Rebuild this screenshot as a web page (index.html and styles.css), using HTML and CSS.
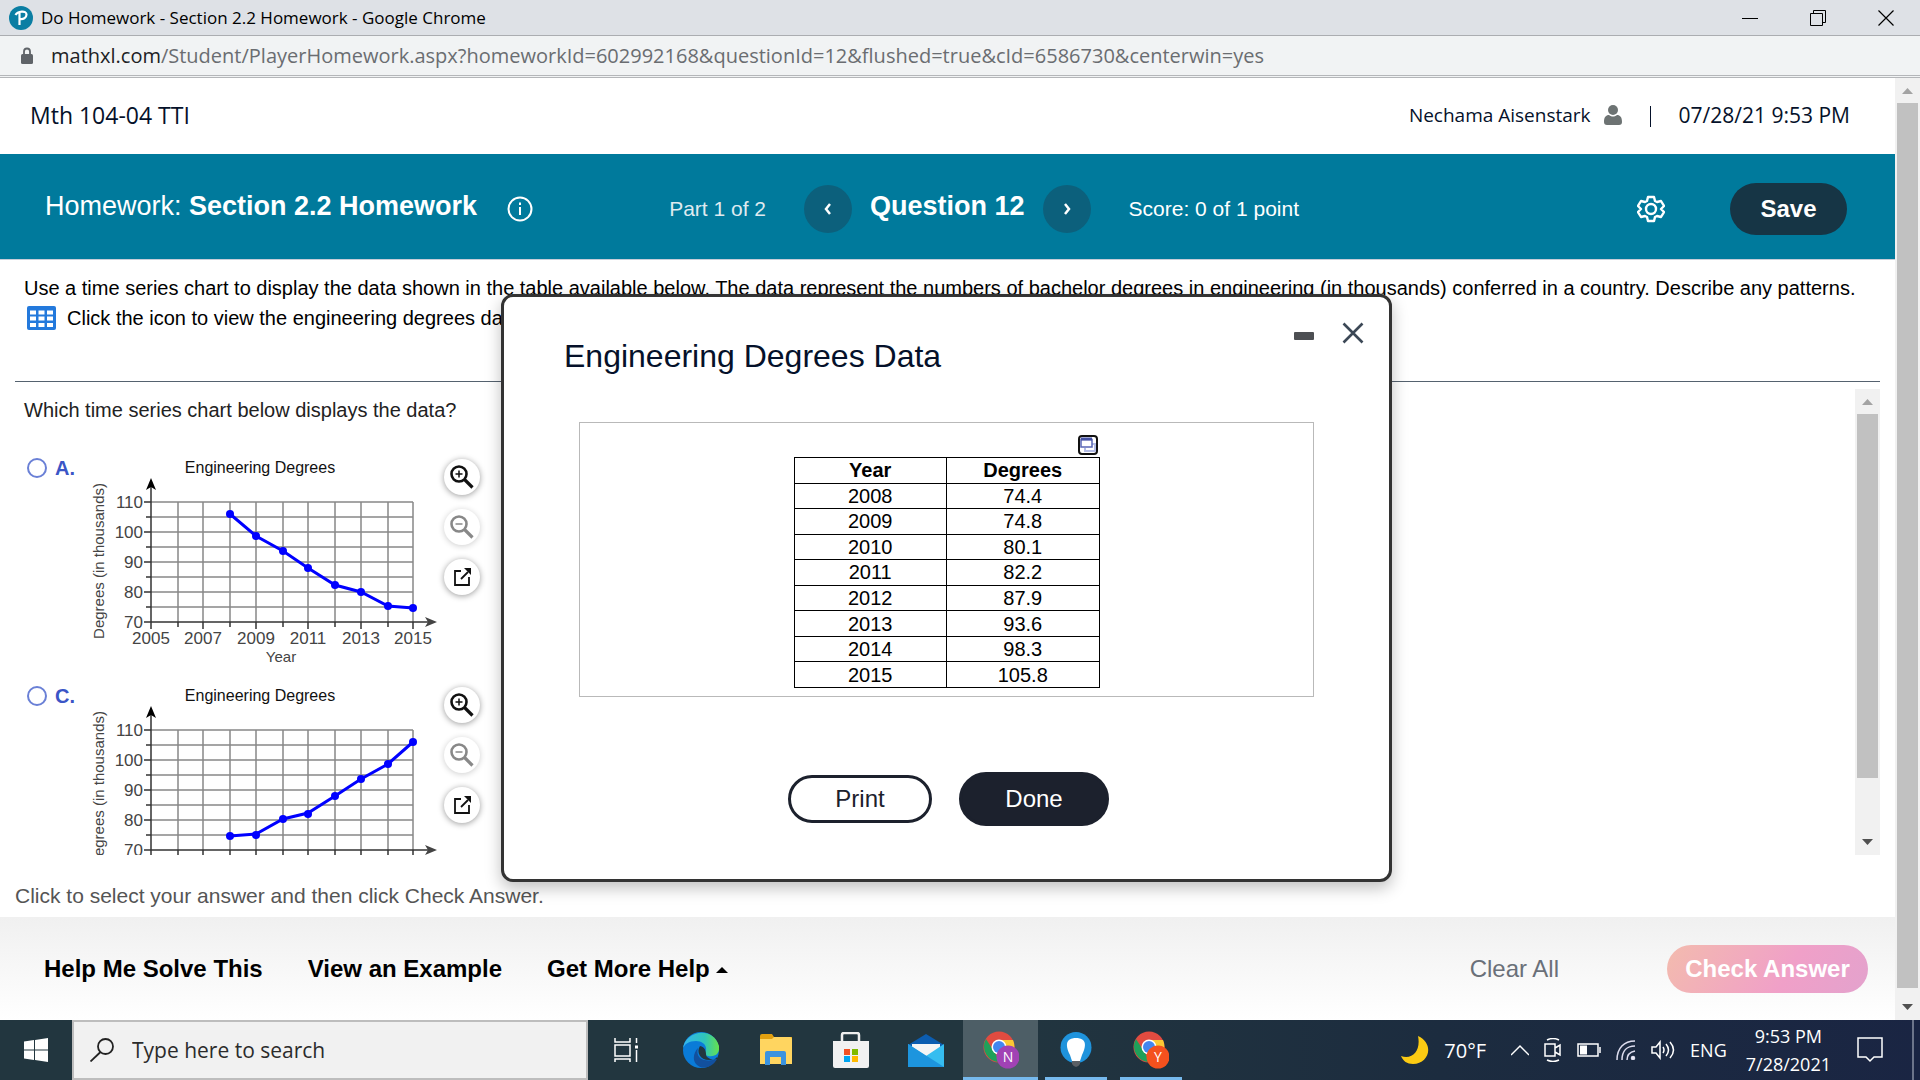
FILE: index.html
```html
<!DOCTYPE html>
<html lang="en">
<head>
    <meta charset="UTF-8">
    <meta name="viewport" content="width=device-width, initial-scale=1.0">
    <title>Do Homework - Section 2.2 Homework</title>
    <link rel="stylesheet" href="styles.css">
</head>
<body>
    <!-- Shared icons -->
    <svg class="defs" width="0" height="0" aria-hidden="true">
        <symbol id="zoom-in" viewBox="0 0 24 24">
            <circle cx="9" cy="9" r="7.5" fill="none" stroke="currentColor" stroke-width="2.6"/>
            <path d="M5.500 9h7M9 5.500v7" fill="none" stroke="currentColor" stroke-width="1.500"/>
            <path d="M14.500 14.500l8 8" stroke="currentColor" stroke-width="3.200"/>
        </symbol>
        <symbol id="zoom-out" viewBox="0 0 24 24">
            <circle cx="9" cy="9" r="7.5" fill="none" stroke="currentColor" stroke-width="2.600"/>
            <path d="M5.500 9h7" fill="none" stroke="currentColor" stroke-width="1.500"/>
            <path d="M14.500 14.500l8 8" stroke="currentColor" stroke-width="3.200"/>
        </symbol>
        <symbol id="pop-out" viewBox="0 0 24 24">
            <path d="M11 6H5v14h14v-8" fill="none" stroke="currentColor" stroke-width="1.800"/>
            <path d="M11 14l7-7" stroke="currentColor" stroke-width="1.800"/>
            <path d="M14 3h7v7z" fill="currentColor"/>
        </symbol>
        <symbol id="axes" viewBox="0 0 360 215">
            <path d="M63 47H325M63 62H325M63 77H325M63 92H325M63 107H325M63 122H325M63 137H325M63 152H325M90 47V167M115 47V167M142 47V167M168 47V167M195 47V167M220 47V167M247 47V167M273 47V167M300 47V167M325 47V167" stroke="#888" stroke-width="1.500"/>
            <path d="M63 30V174M56 47h7M58 62h5M56 77h7M58 92h5M56 107h7M58 122h5M56 137h7M58 152h5M56 167H340M90 167v5M115 167v7M142 167v5M168 167v7M195 167v5M220 167v7M247 167v5M273 167v7M300 167v5M325 167v7" stroke="#333" stroke-width="1.500"/>
            <path d="M63 23l5 12-5-3-5 3z" fill="#000"/>
            <path d="M349 167l-12-5 3 5-3 5z" fill="#444"/>
        </symbol>
        <symbol id="chrome" viewBox="0 0 36 36">
            <circle cx="16" cy="16" r="15.500" fill="#e14b40"/>
            <path d="M3 8L12 22 17 31A15.500 15.500 0 0 1 3 8z" fill="#1fa05a"/>
            <path d="M16 9h14a15.500 15.500 0 0 1-14 22l7-11z" fill="#fbc834"/>
            <circle cx="16" cy="16" r="7.500" fill="#fff"/>
            <circle cx="16" cy="16" r="6" fill="#4286f0"/>
        </symbol>
    </svg>

    <div class="titlebar">
        <svg width="24" height="24" viewBox="0 0 24 24" aria-hidden="true"><circle cx="12" cy="12" r="12" fill="#0b7ea3"/><path d="M10.500 19V7M6.500 9c2-4 11-5 11-.5 0 3.500-3.500 5-6.500 4.500" fill="none" stroke="#fff" stroke-width="2.200"/></svg>
        <span class="window-title">Do Homework - Section 2.2 Homework - Google Chrome</span>
        <div class="window-buttons">
            <button type="button" aria-label="Minimize window"><svg width="16" height="18"><path d="M0 9.500h16" stroke="#000"/></svg></button>
            <button type="button" aria-label="Restore window"><svg width="16" height="16" fill="none" stroke="#000"><path d="M.5 3.500h12v12H.5zM3.500 3V.5h12v12H13"/></svg></button>
            <button type="button" aria-label="Close window"><svg width="16" height="16"><path d="M.5.5l15 15M15.500.5l-15 15" stroke="#000" stroke-width="1.200"/></svg></button>
        </div>
    </div>

    <div class="addressbar">
        <svg width="14" height="18" viewBox="0 0 14 18" aria-hidden="true"><path d="M4 7V4.500a3 3 0 0 1 6 0V7" fill="none" stroke="#5f6368" stroke-width="1.800"/><rect x="1" y="7" width="12" height="10" rx="1.500" fill="#5f6368"/></svg>
        <span class="url"><span class="host">mathxl.com</span>/Student/PlayerHomework.aspx?homeworkId=602992168&amp;questionId=12&amp;flushed=true&amp;cId=6586730&amp;centerwin=yes</span>
    </div>

    <div class="window">
        <div class="page">
            <header class="course-header">
                <span class="course">Mth 104-04 TTI</span>
                <span class="user">Nechama Aisenstark</span>
                <svg class="user-icon" width="18" height="20" viewBox="0 0 18 20" aria-hidden="true"><circle cx="9" cy="5" r="5" fill="#6d7373"/><path d="M0 17c0-5 2-7 5-7 3 2 5 2 8 0 3 0 5 2 5 7q0 3-3 3H3q-3 0-3-3z" fill="#6d7373"/></svg>
                <span class="divider"></span>
                <span class="date">07/28/21 9:53 PM</span>
            </header>

            <nav class="question-bar">
                <h1>Homework: <b>Section 2.2 Homework</b></h1>
                <button type="button" class="info" aria-label="Information"><svg width="26" height="26" fill="none" stroke="#fff" stroke-width="2"><circle cx="13" cy="13" r="11.500"/><path d="M13 11v8M13 6.500v2.500"/></svg></button>
                <span class="part">Part 1 of 2</span>
                <button type="button" class="step" aria-label="Previous question"><svg width="12" height="12" fill="none" stroke="#fff" stroke-width="2.500"><path d="M8 1L4 6l4 5"/></svg></button>
                <h2>Question 12</h2>
                <button type="button" class="step" aria-label="Next question"><svg width="12" height="12" fill="none" stroke="#fff" stroke-width="2.500"><path d="M4 1l4 5-4 5"/></svg></button>
                <span class="score">Score: 0 of 1 point</span>
                <button type="button" class="settings" aria-label="Settings"><svg width="28" height="28" viewBox="0 0 28 28" fill="none" stroke="#fff" stroke-width="2.400" stroke-linejoin="round"><path d="M11 2h6l1 4 2 1 4-1 3 5-3 3 3 3-3 5-4-1-2 1-1 4h-6l-1-4-2-1-4 1-3-5 3-3-3-3 3-5 4 1 2-1z"/><circle cx="14" cy="14" r="5"/></svg></button>
                <button type="button" class="save">Save</button>
            </nav>

            <main class="question">
                <div class="prompt">
                    <p>Use a time series chart to display the data shown in the table available below. The data represent the numbers of bachelor degrees in engineering (in thousands) conferred in a country. Describe any patterns.</p>
                    <a href="#data" class="data-link">
                        <svg width="29" height="24" aria-hidden="true"><rect width="29" height="24" rx="2" fill="#2379dc"/><path d="M3 6.500h6M11.500 6.500h6M20 6.500h6M3 12.500h6M11.500 12.500h6M20 12.500h6M3 19h6M11.500 19h6M20 19h6" stroke="#fff" stroke-width="4"/></svg>
                        <span>Click the icon to view the engineering degrees data.</span>
                    </a>
                </div>

                <div class="answers">
                    <div class="answer-list">
                        <p>Which time series chart below displays the data?</p>
                        <div class="choice">
                            <label><input type="radio" name="answer"> A.</label>
                            <svg class="chart" width="360" height="215">
                                <use href="#axes"/>
                                <text x="172" y="18" class="chart-title">Engineering Degrees</text>
                                <text transform="translate(16 106) rotate(-90)" class="axis-name">Degrees (in thousands)</text>
                                <g class="y-labels"><text x="55" y="53">110</text><text x="55" y="83">100</text><text x="55" y="113">90</text><text x="55" y="143">80</text><text x="55" y="173">70</text></g>
                                <g class="x-labels"><text x="63" y="189">2005</text><text x="115" y="189">2007</text><text x="168" y="189">2009</text><text x="220" y="189">2011</text><text x="273" y="189">2013</text><text x="325" y="189">2015</text></g>
                                <text x="193" y="207" class="axis-name">Year</text>
                                <polyline points="142,59 168,81 195,96 220,113 247,130 273,137 300,151 325,153"/>
                                <g class="dots"><circle cx="142" cy="59" r="4"/><circle cx="168" cy="81" r="4"/><circle cx="195" cy="96" r="4"/><circle cx="220" cy="113" r="4"/><circle cx="247" cy="130" r="4"/><circle cx="273" cy="137" r="4"/><circle cx="300" cy="151" r="4"/><circle cx="325" cy="153" r="4"/></g>
                            </svg>
                            <div class="tools">
                                <button type="button" aria-label="Zoom in"><svg><use href="#zoom-in"/></svg></button>
                                <button type="button" aria-label="Zoom out" disabled><svg><use href="#zoom-out"/></svg></button>
                                <button type="button" aria-label="Open in new window"><svg><use href="#pop-out"/></svg></button>
                            </div>
                        </div>
                        <div class="choice">
                            <label><input type="radio" name="answer"> C.</label>
                            <svg class="chart" width="360" height="215">
                                <use href="#axes"/>
                                <text x="172" y="18" class="chart-title">Engineering Degrees</text>
                                <text transform="translate(16 106) rotate(-90)" class="axis-name">Degrees (in thousands)</text>
                                <g class="y-labels"><text x="55" y="53">110</text><text x="55" y="83">100</text><text x="55" y="113">90</text><text x="55" y="143">80</text><text x="55" y="173">70</text></g>
                                <polyline points="142,153 168,151 195,136 220,130 247,113 273,96 300,81 325,59"/>
                                <g class="dots"><circle cx="142" cy="153" r="4"/><circle cx="168" cy="152" r="4"/><circle cx="195" cy="136" r="4"/><circle cx="220" cy="131" r="4"/><circle cx="247" cy="113" r="4"/><circle cx="273" cy="96" r="4"/><circle cx="300" cy="81" r="4"/><circle cx="325" cy="59" r="4"/></g>
                            </svg>
                            <div class="tools">
                                <button type="button" aria-label="Zoom in"><svg><use href="#zoom-in"/></svg></button>
                                <button type="button" aria-label="Zoom out" disabled><svg><use href="#zoom-out"/></svg></button>
                                <button type="button" aria-label="Open in new window"><svg><use href="#pop-out"/></svg></button>
                            </div>
                        </div>
                    </div>
                    <div class="scrollbar inner"><span class="arrow up"></span><span class="thumb"></span><span class="arrow down"></span></div>
                </div>

                <p class="hint">Click to select your answer and then click Check Answer.</p>
            </main>

            <footer class="actions">
                <a href="#help">Help Me Solve This</a>
                <a href="#example">View an Example</a>
                <a href="#more">Get More Help <span class="caret"></span></a>
                <button type="button" class="clear">Clear All</button>
                <button type="button" class="check">Check Answer</button>
            </footer>

            <section class="modal" id="data" role="dialog" aria-labelledby="modal-title">
                <div class="modal-controls">
                    <button type="button" aria-label="Minimize"><svg width="20" height="22"><rect y="10" width="20" height="8" rx="1" fill="#4d4f53"/></svg></button>
                    <button type="button" aria-label="Close"><svg width="22" height="22"><path d="M1.500 1.500l19 19M20.500 1.500l-19 19" stroke="#3c4856" stroke-width="2.600"/></svg></button>
                </div>
                <h3 id="modal-title">Engineering Degrees Data</h3>
                <div class="data-box">
                    <div class="data-wrap">
                        <button type="button" class="copy" aria-label="Copy data"><svg width="20" height="20" fill="none"><rect x="1" y="1" width="18" height="18" rx="3" fill="#fff" stroke="#111" stroke-width="2"/><path d="M7 13v3h10V9h-3" stroke="#b3bce6" stroke-width="2"/><path d="M3 4.500h11V12H3z" stroke="#5865b5" stroke-width="1.500"/><path d="M3 4h11" stroke="#4451a5" stroke-width="3"/></svg></button>
                        <table>
                            <tr><th>Year</th><th>Degrees</th></tr>
                            <tr><td>2008</td><td>74.4</td></tr>
                            <tr><td>2009</td><td>74.8</td></tr>
                            <tr><td>2010</td><td>80.1</td></tr>
                            <tr><td>2011</td><td>82.2</td></tr>
                            <tr><td>2012</td><td>87.9</td></tr>
                            <tr><td>2013</td><td>93.6</td></tr>
                            <tr><td>2014</td><td>98.3</td></tr>
                            <tr><td>2015</td><td>105.8</td></tr>
                        </table>
                    </div>
                </div>
                <div class="modal-buttons">
                    <button type="button" class="print">Print</button>
                    <button type="button" class="done">Done</button>
                </div>
            </section>
        </div>
        <div class="scrollbar outer"><span class="arrow up"></span><span class="thumb"></span><span class="arrow down"></span></div>
    </div>

    <div class="taskbar">
        <button type="button" class="start" aria-label="Start"><svg width="24" height="24" fill="#fff"><path d="M0 3.500L10 2v9.500H0zM11 2l13-2v11.500H11zM0 12.500h10V22L0 20.500zM11 12.500h13V24l-13-2z"/></svg></button>
        <label class="search">
            <svg width="24" height="24" fill="none" stroke="#222" stroke-width="1.800"><circle cx="15.500" cy="8.500" r="7.500"/><path d="M10.500 14L.5 23.500"/></svg>
            <input type="text" placeholder="Type here to search" aria-label="Search">
        </label>
        <div class="apps">
            <button type="button" aria-label="Task view"><svg width="24" height="24" fill="none" stroke="#fff" stroke-width="1.500"><path d="M1 0v4h15V0M1 7h15v11H1zM1 24v-3h15v3M22.500 0v5M22.500 12v12"/><path d="M21 9h3" stroke-width="3"/></svg></button>
            <button type="button" aria-label="Edge"><svg width="36" height="36" viewBox="0 0 36 36">
                <defs><linearGradient id="edge-top"><stop stop-color="#35b5f0"/><stop offset=".6" stop-color="#2fc5ba"/><stop offset="1" stop-color="#66e24c"/></linearGradient></defs>
                <circle cx="18" cy="18" r="18" fill="#0a7bd8"/>
                <path d="M0 17C1-1 30-7 36 14c1 9-5 11-11 10-5-1-3-3-2-6 1-5-4-9-10-9C6 9 1 12 0 17z" fill="url(#edge-top)"/>
                <path d="M17 14c-4 6 0 14 9 14 4 0 7-1 8-3l2 11H24l12-9c-3 1-13 1-13-5 0-3-1-7-6-8z" fill="#22363f"/>
                <path d="M15 16c-3 10 6 15 19 11-4 8-15 12-21 5-4-5-2-12 2-16z" fill="#12509e"/>
            </svg></button>
            <button type="button" aria-label="File Explorer"><svg width="32" height="32"><path d="M0 2q0-2 2-2h10l2 3h18v7H0z" fill="#e2a010"/><path d="M0 5h12l2-2h16q2 0 2 2v25H0z" fill="#ffd560"/><path d="M5 31V19q0-2 2-2h17q2 0 2 2v12h-5v-8H10v8z" fill="#3b93df"/></svg></button>
            <button type="button" aria-label="Microsoft Store"><svg width="36" height="36"><path d="M9 11V3q0-2 2-2h13q2 0 2 2v8" fill="none" stroke="#eee" stroke-width="2.500"/><path d="M0 9h36v25q0 2-2 2H2q-2 0-2-2z" fill="#f1f1f1"/><path d="M11 17h6v6h-6z" fill="#f25022"/><path d="M19 17h6v6h-6z" fill="#7fba00"/><path d="M11 24h6v6h-6z" fill="#00a4ef"/><path d="M19 24h6v6h-6z" fill="#ffb900"/></svg></button>
            <button type="button" aria-label="Mail"><svg width="36" height="33"><path d="M0 11L18 0l18 11v9H0z" fill="#0c5db0"/><path d="M4 10h28v9L18 25 4 19z" fill="#f5f5f5"/><path d="M0 10l18 12L36 10v23H0z" fill="#36bdf0"/><path d="M0 10l36 23H0z" fill="#1d95de"/></svg></button>
            <button type="button" class="running active" aria-label="Chrome, profile N"><svg width="36" height="38" viewBox="0 0 36 38"><use href="#chrome" width="36" height="36"/><circle cx="25" cy="26" r="11.500" fill="#a142b4"/><text x="25" y="31" class="badge">N</text></svg></button>
            <button type="button" class="running" aria-label="Tips"><svg width="32" height="36"><circle cx="16" cy="15.500" r="15.500" fill="#1f93dc"/><path d="M10 23C2 7 12 6 16 6s14 1 6 17l-2 6h-8z" fill="#fff"/><path d="M12 29h8v3q-4 6-8 0z" fill="#5a5f64"/></svg></button>
            <button type="button" class="running" aria-label="Chrome, profile Y"><svg width="36" height="38" viewBox="0 0 36 38"><use href="#chrome" width="36" height="36"/><circle cx="25" cy="26" r="11.500" fill="#f4511e"/><text x="25" y="31" class="badge">Y</text></svg></button>
        </div>
        <div class="tray">
            <svg width="28" height="28"><path d="M17 0c17 8 11 28-5 28C6 28 2 25 0 20c12 4 20-6 17-20z" fill="#fccb13"/></svg>
            <span class="temp">70°F</span>
            <svg width="18" height="12" fill="none" stroke="#fff" stroke-width="1.500"><path d="M0 11l9-9 9 9"/></svg>
            <svg width="18" height="24" fill="none" stroke="#fff" stroke-width="1.500"><path d="M3 2q6-3 12 0M3 22q6 3 12 0M1 6h10v12H1zM11 10l5-3v10l-5-3"/></svg>
            <svg width="24" height="14" fill="none" stroke="#fff" stroke-width="1.500"><path d="M1 1h20v12H1zM23 4v6"/><path d="M3 7h7" stroke-width="9"/></svg>
            <svg width="20" height="20" fill="none" stroke="#dde" stroke-width="1.500"><path d="M1 20C1 8 8 1 19 1M6 20C6 11 11 6 19 6M11 20c0-5 3-8 8-9"/><circle cx="17" cy="18" r="1.500" fill="#fff"/></svg>
            <svg width="24" height="20" fill="none" stroke="#fff" stroke-width="1.500"><path d="M1 7h4l4-5v16l-4-5H1zM12 7q2 3 0 6M15 4q5 6 0 12M19 2q7 8 0 16"/></svg>
            <span class="lang">ENG</span>
            <div class="clock"><span>9:53 PM</span><span>7/28/2021</span></div>
            <button type="button" aria-label="Notifications"><svg width="26" height="26" fill="none" stroke="#fff" stroke-width="1.500"><path d="M1 1h24v19h-8l-4 4-4-4H1z"/></svg></button>
        </div>
    </div>
</body>
</html>
```

FILE: styles.css
```css
* {
    box-sizing: border-box;
}

body {
    margin: 0;
    height: 100vh;
    display: flex;
    flex-direction: column;
    overflow: hidden;
    background-color: #fff;
    color: #000;
    font-family: "Liberation Sans", Arial, sans-serif;
    font-size: 20px;
}

h1, h2, h3, p {
    margin: 0;
}

button {
    margin: 0;
    padding: 0;
    border: none;
    background: none;
    font-family: inherit;
    cursor: pointer;
}

button svg {
    display: block;
}

.defs {
    position: absolute;
}

/* Browser window */
.titlebar {
    display: flex;
    align-items: center;
    height: 36px;
    padding-left: 9px;
    background-color: #dee1e6;
    border-bottom: 1px solid #abadb1;
    font-family: "Open Sans", sans-serif;
    font-size: 17px;
}

.window-title {
    margin-left: 8px;
}

.window-buttons {
    display: flex;
    margin-left: auto;
}

.window-buttons button {
    width: 68px;
    height: 32px;
    display: flex;
    align-items: center;
    justify-content: center;
}

.addressbar {
    display: flex;
    align-items: center;
    height: 42px;
    padding: 0 20px;
    background-color: #f1f3f4;
    border-bottom: 3px double #b4b6b9;
    color: #6a6d71;
    font-family: "Open Sans", sans-serif;
    font-size: 20px;
}

.url {
    margin-left: 17px;
}

.host {
    color: #202124;
}

.window {
    flex: 1;
    min-height: 0;
    display: flex;
}

.page {
    position: relative;
    flex: 1;
    min-width: 0;
    display: flex;
    flex-direction: column;
}

/* Scrollbars */
.scrollbar {
    display: flex;
    flex-direction: column;
    align-items: center;
    width: 25px;
    background-color: #f1f1f1;
}

.scrollbar .thumb {
    width: 21px;
    background-color: #c1c1c1;
}

.inner .thumb {
    height: 364px;
}

.outer .thumb {
    height: 885px;
}

.arrow {
    width: 11px;
    height: 6px;
    clip-path: polygon(50% 0, 100% 100%, 0 100%);
    background-color: #a3a3a3;
    margin: 10px 0 9px;
}

.arrow.down {
    clip-path: polygon(0 0, 100% 0, 50% 100%);
    background-color: #505050;
    margin: auto 0 10px;
}

/* Course header */
.course-header {
    display: flex;
    align-items: center;
    height: 76px;
    padding: 0 45px 3px 30px;
    color: #05112a;
    font-family: "Open Sans", sans-serif;
    font-size: 23px;
}

.user {
    margin-left: auto;
    font-size: 19px;
}

.user-icon {
    margin-left: 13px;
}

.divider {
    width: 1px;
    height: 21px;
    margin: 4px 28px 0;
    background-color: #05112a;
}

.date {
    font-size: 21px;
}

/* Question bar */
.question-bar {
    display: flex;
    align-items: center;
    height: 106px;
    padding: 4px 48px 0 45px;
    background-color: #007a9c;
    border-bottom: 1px solid #c7cdd8;
    color: #fff;
}

.question-bar h1,
.question-bar h2 {
    padding-bottom: 4px;
    font-size: 27px;
}

.question-bar h1 {
    font-weight: normal;
}

.info {
    margin-left: 30px;
}

.part {
    margin-left: 136px;
    color: #dfeaf0;
    font-size: 21px;
}

.step {
    display: flex;
    align-items: center;
    justify-content: center;
    width: 48px;
    height: 48px;
    border-radius: 50%;
    background-color: #0c607c;
}

.part + .step {
    margin-left: 38px;
}

.question-bar h2 {
    margin: 0 18px;
}

.score {
    margin-left: 38px;
    font-size: 21px;
}

.settings {
    margin-left: auto;
}

.save {
    width: 117px;
    height: 52px;
    margin-left: 65px;
    border-radius: 26px;
    background-color: #163545;
    color: #fff;
    font-size: 24px;
    font-weight: bold;
}

/* Question */
.question {
    flex: 1;
    min-height: 0;
    display: flex;
    flex-direction: column;
    padding: 0 15px;
}

.prompt {
    height: 122px;
    padding: 15px 9px 0;
    border-bottom: 1px solid #55626f;
    line-height: 26px;
    white-space: nowrap;
}

.data-link {
    display: flex;
    align-items: center;
    gap: 11px;
    margin-top: 4px;
    padding-left: 3px;
    color: #000;
    text-decoration: none;
}

.answers {
    display: flex;
    height: 466px;
    margin-top: 7px;
}

.answer-list {
    flex: 1;
    overflow: hidden;
    padding: 8px 9px 0;
    color: #222;
    line-height: 26px;
}

.answer-list p {
    margin-bottom: 32px;
}

.choice {
    display: flex;
    align-items: flex-start;
    height: 228px;
}

.choice label {
    display: flex;
    align-items: center;
    gap: 8px;
    width: 64px;
    padding-left: 3px;
    color: #3b55c6;
    font-weight: bold;
}

.choice input {
    appearance: none;
    width: 20px;
    height: 20px;
    margin: 0;
    border: 2px solid #6a80d6;
    border-radius: 50%;
}

.chart {
    fill: #444;
    font-size: 17px;
}

.chart text {
    text-anchor: middle;
}

.chart .chart-title {
    fill: #111;
    font-size: 16px;
}

.chart .y-labels text {
    text-anchor: end;
}

.chart .axis-name {
    font-size: 15px;
}

.chart polyline {
    fill: none;
    stroke: #00f;
    stroke-width: 3;
}

.dots {
    fill: #00f;
}

.tools {
    display: flex;
    flex-direction: column;
    gap: 14px;
    margin-left: -4px;
    padding-top: 4px;
}

.tools button {
    display: flex;
    align-items: center;
    justify-content: center;
    width: 36px;
    height: 36px;
    border-radius: 50%;
    background-color: #fff;
    box-shadow: 0 1px 6px rgba(0, 0, 0, 0.4);
    color: #111;
}

.tools button:disabled {
    box-shadow: 0 1px 6px rgba(0, 0, 0, 0.2);
    color: #888;
}

.tools svg {
    width: 24px;
    height: 24px;
}

.hint {
    margin-top: 29px;
    color: #555;
    font-size: 21px;
}

/* Footer */
.actions {
    display: flex;
    align-items: center;
    height: 103px;
    padding: 0 27px 0 44px;
    background: linear-gradient(#f0f0f0, #fff);
}

.actions a {
    margin-right: 45px;
    color: #000;
    font-size: 24px;
    font-weight: bold;
    text-decoration: none;
}

.caret {
    display: inline-block;
    border: 6px solid transparent;
    border-top: none;
    border-bottom-color: #000;
    vertical-align: middle;
}

.clear {
    margin-left: auto;
    color: #6a7079;
    font-size: 24px;
}

.check {
    width: 201px;
    height: 48px;
    margin-left: 108px;
    border-radius: 24px;
    background: linear-gradient(120deg, #f3bbae, #f0a0c8 60%, #e3a2cd);
    color: #fff;
    font-size: 24px;
    font-weight: bold;
}

/* Data window */
.modal {
    position: absolute;
    top: 216px;
    left: 501px;
    width: 891px;
    padding: 25px 25px 53px;
    border: 3px solid #333;
    border-radius: 12px;
    background-color: #fff;
    box-shadow: 0 6px 16px rgba(0, 0, 0, 0.25);
}

.modal-controls {
    display: flex;
    justify-content: flex-end;
    gap: 28px;
}

.modal h3 {
    margin: -7px 0 47px 35px;
    color: #05112a;
    font-size: 32px;
    font-weight: normal;
    line-height: 38px;
}

.data-box {
    display: flex;
    justify-content: center;
    margin: 0 50px;
    padding: 12px 0 8px;
    border: 1px solid #b9b9b9;
}

.data-wrap {
    display: flex;
    flex-direction: column;
    width: 306px;
}

.copy {
    align-self: flex-end;
    margin: 0 2px 2px 0;
}

.data-box table {
    width: 100%;
    height: 231px;
    table-layout: fixed;
    border-collapse: collapse;
}

.data-box th,
.data-box td {
    padding: 0;
    border: 1px solid #000;
    text-align: center;
    line-height: 22px;
}

.modal-buttons {
    display: flex;
    align-items: center;
    justify-content: center;
    gap: 27px;
    margin-top: 75px;
    padding-left: 4px;
}

.modal-buttons button {
    width: 144px;
    height: 48px;
    border: 3px solid #1c212d;
    border-radius: 27px;
    color: #1c212d;
    font-size: 24px;
}

.modal-buttons .done {
    width: 150px;
    height: 54px;
    background-color: #1c212d;
    color: #fff;
}

/* Taskbar */
.taskbar {
    display: flex;
    height: 60px;
    padding-right: 6px;
    background: linear-gradient(90deg, #22363f 50%, #1c2c3f 75%, #1a2543);
    color: #fff;
    font-family: "Open Sans", sans-serif;
}

.start {
    display: flex;
    align-items: center;
    justify-content: center;
    width: 72px;
}

.search {
    display: flex;
    align-items: center;
    gap: 16px;
    width: 516px;
    padding-left: 16px;
    border: 2px solid #bdbdbd;
    background-color: #f1f1f1;
}

.search input {
    flex: 1;
    border: none;
    outline: none;
    background: none;
    font-family: inherit;
    font-size: 21px;
}

.search input::placeholder {
    color: #2b2b2b;
}

.apps {
    display: flex;
}

.apps button {
    display: flex;
    align-items: center;
    justify-content: center;
    width: 75px;
}

.running {
    background: linear-gradient(#76b9ed, #76b9ed) center bottom / 62px 3px no-repeat;
}

.running.active {
    background-color: #4d5e66;
    background-size: 100% 3px;
}

.badge {
    fill: #fff;
    font-size: 14px;
    text-anchor: middle;
}

.tray {
    display: flex;
    align-items: center;
    gap: 15px;
    margin-left: auto;
    padding-right: 29px;
    border-right: 2px solid #6c758a;
    font-size: 18px;
}

.temp {
    margin-right: 10px;
    font-size: 20px;
}

.clock {
    display: flex;
    flex-direction: column;
    align-items: center;
    margin-left: 4px;
    line-height: 28px;
}

.tray button {
    margin-left: 11px;
}
```
